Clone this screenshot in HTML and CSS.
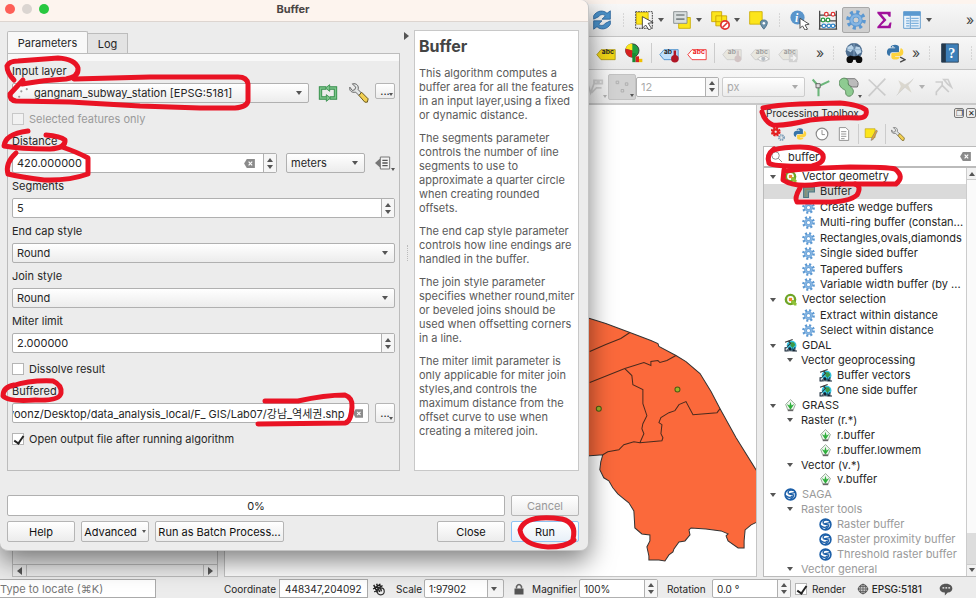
FILE: index.html
```html
<!DOCTYPE html>
<html lang="en">
<head>
<meta charset="utf-8">
<title>Buffer</title>
<link rel="stylesheet" href="styles.css">
</head>
<body>
<svg class="defs" aria-hidden="true">
  <symbol id="gear" viewBox="0 0 24 24"><g fill="none" stroke="#5b98d2"><circle cx="12" cy="12" r="9.500" stroke-width="4.500" stroke-dasharray="3.700 3.760"/><circle cx="12" cy="12" r="5.500" stroke-width="5" stroke="#5b98d2"/><circle cx="12" cy="12" r="5.500" stroke-width="3" stroke="#86b5e2"/></g></symbol>
  <symbol id="qgis" viewBox="0 0 24 24"><circle cx="12" cy="12" r="8.500" fill="#fff" stroke="#6fa628" stroke-width="4.500"/><path d="M13 13h5l5 6v4h-4l-6-6z" fill="#8fc137"/><path d="M9 9h6v6h-6z" fill="#f0872c"/></symbol>
  <symbol id="gdal" viewBox="0 0 24 24"><circle cx="14" cy="12" r="9" fill="#35c3e2"/><path d="M12 6l6 0 3 5-5 5-4-3z" fill="#3c9a46"/><path d="M2 6l14-5M8 3l4 5-6 6" stroke="#333" stroke-width="2" fill="none"/><path d="M1 15h5v2H3v4h2v-2h2v4H1zM9 15h3l2 3v5h-2v-2h-2v2H8v-6zM16 15l4 8h-5zM19 15h2v6h3v2h-5z" fill="#123"/></symbol>
  <symbol id="grass" viewBox="0 0 24 24"><path d="M12 1l9 9-4 10H7L3 10z" fill="#eef7ee" stroke="#8a9a8a" stroke-width="1.500"/><path d="M12 20L5 9l5 3 2-7 2 7 5-3z" fill="#2fae3c"/><path d="M7 21h10" stroke="#666" stroke-width="3"/></symbol>
  <symbol id="saga" viewBox="0 0 24 24"><circle cx="12" cy="12" r="10" fill="#fff" stroke="#1c5fa8" stroke-width="3"/><path d="M19 5C12 2 6 5 8 10M3 14q8 6 12 1M9 11L22 8M8 11l10 2-2 5-5 3" fill="none" stroke="#1c5fa8" stroke-width="2.500"/></symbol>
  <symbol id="bufferTool" viewBox="0 0 24 24"><path d="M3 23V4h20v9H12v10z" fill="#7d9791" stroke="#4c7785" stroke-width="2"/><path d="M7 22V8h15" fill="none" stroke="#8c8f6a" stroke-width="2"/></symbol>
  <symbol id="wrench" viewBox="0 0 24 24"><path d="M4 1l4 4-1 3-3 1-3-4C0 9 3 12 8 11l4 4 3-3-4-4C12 3 9 0 4 1z" fill="#e3e6e6" stroke="#666" stroke-width="1.200"/><path d="M12 15l3-4 8 8-1 4-3 0z" fill="#f1cf52" stroke="#6b5a20" stroke-width="1.200"/></symbol>
  <symbol id="python" viewBox="0 0 24 24"><path d="M6 6c0-5 12-5 11 0v6H8c-3 0-3 5-3 5-5 0-5-10 0-10h7V6z" fill="#3874a8"/><path d="M18 18c0 5-12 5-11 0v-4c0-2 9 0 11-3 1-2 1-4 1-4 5 0 5 10 0 10h-7v1z" fill="#fdd33f"/><circle cx="9" cy="5" r="1" fill="#fff"/></symbol>
  <symbol id="clear" viewBox="0 0 12 10"><path d="M3 0h9v10H3L0 5z" fill="#8b8b8b"/><path d="M5 3l4 4M9 3L5 7" stroke="#fff" stroke-width="1.300"/></symbol>
  <symbol id="tag" viewBox="0 0 24 16"><path d="M1 8l5-6h17v12H6z"/></symbol>
</svg>

<main class="app">
  <header class="app-title"></header>
  <section class="toolbar first" aria-label="Main tools">
    <button class="tool" aria-label="Refresh"><svg viewBox="0 0 24 24"><g fill="#4a90c8" stroke="#2b649b"><path d="M2 11V7c4-7 12-7 16-3l4-3v10H12l4-4c-3-3-7-1-8 1z"/><path d="M22 13v4c-4 7-12 7-16 3l-4 3V13h10l-4 4c3 3 7 1 8-1z"/></g></svg></button>
    <i class="handle"></i>
    <button class="tool menu" aria-label="Select features"><svg viewBox="0 0 24 24"><path d="M2 2h20v20H2z" fill="none" stroke="#222" stroke-dasharray="2 1"/><path d="M3 3h14v14H3z" fill="#fce51b" stroke="#c8a900"/><path d="M10 8l13 7-6 1 4 6-3 2-4-6-4 4z" fill="#fff" stroke="#333"/></svg></button>
    <button class="tool menu" aria-label="Select by value"><svg viewBox="0 0 24 24"><path d="M8 9h14v13H8z" fill="#fce51b" stroke="#c8a900"/><path d="M2 2h16v14H2z" fill="#d9dedf" stroke="#7d8587"/><path d="M5 6h10M5 11h10" stroke="#7d8587" stroke-width="2"/></svg></button>
    <button class="tool menu" aria-label="Deselect"><svg viewBox="0 0 24 24"><path d="M2 2h12v12H2zM7 7h13v12H7z" fill="#fce51b" stroke="#c8a000"/><circle cx="18" cy="18" r="5" fill="#fff" stroke="#e03030" stroke-width="2"/><path d="M15 21l6-6" stroke="#e03030" stroke-width="2"/></svg></button>
    <button class="tool" aria-label="Select by location"><svg viewBox="0 0 24 24"><path d="M2 2h15v15H2z" fill="#fce51b" stroke="#c8a900"/><path d="M19 23c-7-8-4-11 0-11s7 3 0 11z" fill="#6e93ab" stroke="#446b84"/><circle cx="19" cy="16" r="1.500" fill="#fff"/></svg></button>
    <i class="handle"></i>
    <button class="tool" aria-label="Identify"><svg viewBox="0 0 24 24"><circle cx="9" cy="9" r="8.500" fill="#5a95cb"/><text x="6" y="14" class="glyph-i">i</text><path d="M12 10l11 7-5 1 3 5-3 1-3-5-3 3z" fill="#fff" stroke="#333"/></svg></button>
    <button class="tool" aria-label="Field calculator"><svg viewBox="0 0 24 24"><path d="M2 1v22M22 1v22M2 6h20M2 13h20M2 19h20M1 23h22" fill="none" stroke="#444" stroke-width="1.500"/><g stroke-width="1.500" fill="#fff"><g stroke="#d33"><circle cx="10" cy="5" r="2.200"/><circle cx="18" cy="5" r="2.200"/></g><g stroke="#2a9a40"><circle cx="6" cy="12" r="2.200"/><circle cx="12" cy="12" r="2.200"/></g><g stroke="#38c"><circle cx="7" cy="19" r="2.200"/><circle cx="13" cy="19" r="2.200"/><circle cx="18" cy="19" r="2.200"/></g></g></svg></button>
    <button class="tool pressed" aria-label="Processing toolbox"><svg><use href="#gear"/></svg></button>
    <button class="tool" aria-label="Statistics"><svg viewBox="0 0 24 24"><path d="M4 2h16v6h-2l-2-3H9l6 7-7 7h9l2-4h2l-1 7H4v-2l7-8-7-8z" fill="#a0109a"/></svg></button>
    <button class="tool menu" aria-label="Attribute table"><svg viewBox="0 0 24 24"><path d="M2 2h20v20H2z" fill="#eaf3fb" stroke="#5291c9"/><path d="M2 2h20v5H2z" fill="#5a99d0"/><path d="M5 10h4M11 10h9M5 13h4M11 13h9M5 16h4M11 16h9M5 19h4M11 19h9" stroke="#7fb2dd" stroke-width="1.500"/><path d="M10 7v15" stroke="#5291c9"/></svg></button>
    <span class="more end">»</span>
  </section>
  <section class="toolbar second" aria-label="Label tools">
    <button class="tool" aria-label="Labels"><svg viewBox="0 0 24 24"><use href="#tag" class="tag" fill="#f0d516" stroke="#a89410"/><text x="7" y="13" class="glyph">abc</text></svg></button>
    <button class="tool" aria-label="Diagrams"><svg viewBox="0 0 24 24"><circle cx="10" cy="9" r="8" fill="#20a040" stroke="#333"/><path d="M10 9V1a8 8 0 00-8 6z" fill="#fce51b"/><path d="M10 9v8a8 8 0 01-8-10z" fill="#d62020"/><path d="M10 12h4v11h-4z" fill="#198a32"/><path d="M14 16h4v7h-4z" fill="#d62020"/><path d="M18 19h4v4h-4z" fill="#f0c000"/></svg></button>
    <i class="rule"></i>
    <button class="tool" aria-label="Label pin"><svg viewBox="0 0 24 24"><use href="#tag" class="tag" fill="#bfe0fa" stroke="#3d87c6"/><text x="6" y="13" class="glyph">ab</text><path d="M19 9v9" stroke="#b01525" stroke-width="3"/><circle cx="19" cy="19" r="4.500" fill="#b01525"/></svg></button>
    <button class="tool" aria-label="Unplaced labels"><svg viewBox="0 0 24 24"><use href="#tag" class="tag" fill="#fff" stroke="#e22"/><text x="7" y="13" class="glyph red">abc</text></svg></button>
    <i class="rule"></i>
    <button class="tool off" disabled aria-label="Pin labels"><svg viewBox="0 0 24 24"><use href="#tag" class="tag" fill="#dedbc8" stroke="#999"/><text x="7" y="13" class="glyph">ab</text><path d="M19 9v9" stroke="#a88" stroke-width="3"/><circle cx="19" cy="19" r="4" fill="#a88"/></svg></button>
    <button class="tool off" disabled aria-label="Show labels"><svg viewBox="0 0 24 24"><use href="#tag" class="tag" fill="#dedbc8" stroke="#999"/><text x="7" y="13" class="glyph">abc</text><path d="M9 19q7-7 14 0-7 6-14 0" fill="#fff" stroke="#777"/><circle cx="16" cy="19" r="2.500" fill="#678"/></svg></button>
    <button class="tool off" disabled aria-label="Move label"><svg viewBox="0 0 24 24"><use href="#tag" class="tag" fill="#dedbc8" stroke="#999"/><text x="7" y="13" class="glyph">abc</text><path d="M13 13h10v10H13z" fill="#aaa"/><path d="M15 18h6M18 15l3 3-3 3" stroke="#fff" stroke-width="2" fill="none"/></svg></button>
    <i class="spacer"></i><span class="more">»</span>
    <i class="handle"></i>
    <button class="tool" aria-label="Map search"><svg viewBox="0 0 24 24"><circle cx="12" cy="10" r="10" fill="#4d6d8f"/><path d="M4 5l5-3 3 4-4 5-4-2zM14 4l5 1 2 6-5 3-3-5z" fill="#b9d3e8"/><path d="M3 8h18M12 0v18" stroke="#8eaecb"/><circle cx="7" cy="20" r="4" fill="#0b0b0b"/><circle cx="18" cy="20" r="4" fill="#0b0b0b"/><path d="M7 15l4 1h3l4-1 2 5H5z" fill="#0b0b0b"/></svg></button>
    <i class="handle"></i>
    <button class="tool" aria-label="Python console"><svg viewBox="0 0 24 24"><use href="#python" width="22" height="22"/><path d="M17 17l6 3-6 3" fill="none" stroke="#444" stroke-width="1.500"/></svg></button>
    <span class="more">»</span>
    <i class="handle"></i>
    <button class="tool" aria-label="Help contents"><svg viewBox="0 0 24 24"><path d="M2 1h20v22H2z" fill="#3d7fb9" stroke="#2b3f52"/><path d="M2 1h5v22H2z" fill="#24384b"/><text x="10" y="18" class="glyph-q">?</text></svg></button>
    <i class="handle"></i>
  </section>
  <section class="toolbar third" aria-label="Snapping tools">
    <button class="tool off" disabled aria-label="Vertex"><svg viewBox="0 0 24 24"><path d="M3 4l5 15 5-14M12 4h4v4h-4zM18 4h4v4h-4zM9 19l6-6h6" fill="none" stroke="#999" stroke-width="2"/></svg><b class="tri tiny"></b></button>
    <button class="tool pressed soft" disabled aria-label="Snap type"><svg viewBox="0 0 24 24"><path d="M5 5h3v3H5zM16 7h3v3h-3zM11 15h3v3h-3z" fill="none" stroke="#aaa"/></svg><b class="tri tiny"></b></button>
    <div class="spin tolerance off-field"><input aria-label="Tolerance" value="12" disabled><span class="steps"><b class="up"></b><b class="down"></b></span></div>
    <div class="combo unit off-field"><select aria-label="Tolerance unit" disabled><option>px</option></select></div>
    <button class="tool" aria-label="Topological editing"><svg viewBox="0 0 24 24"><path d="M2 3l7 8 13-6M9 11v12" fill="none" stroke="#6bb67a" stroke-width="2.500"/><path d="M6 8h5v5H6z" fill="#ddd" stroke="#555"/></svg></button>
    <button class="tool" aria-label="Overlap"><svg viewBox="0 0 24 24"><path d="M8 2h11q6 4 3 10h-6q-6-2-8-10z" fill="#bbb" stroke="#666"/><path d="M2 3c5-4 10 0 9 4s8 6 6 12-9 5-9 0-2-3-5-6-4-7-1-10z" fill="#8ecb91" stroke="#4e7e52"/></svg><b class="tri tiny"></b></button>
    <button class="tool off" disabled aria-label="Intersection"><svg viewBox="0 0 24 24"><path d="M2 3l20 19M22 2L2 23" stroke="#999" stroke-width="2"/></svg></button>
    <button class="tool menu off" disabled aria-label="Tracing"><svg viewBox="0 0 24 24"><path d="M4 4l8 5 10-6-6 7 4 9-8-6-9 8 4-10z" fill="#bbb29c"/><path d="M22 2L2 22" stroke="#aaa"/></svg></button>
    <button class="tool off" disabled aria-label="Digitize"><svg viewBox="0 0 24 24"><path d="M3 6h8v4l-7 8v4M11 10l8 8M13 3h5l4 9-4-3z" fill="none" stroke="#999" stroke-width="2"/></svg></button>
  </section>

  <div class="workspace">
    <aside class="layers"><div class="hscroll"><b class="arr left"></b><i></i><b class="arr right"></b></div></aside>
    <section class="canvas" aria-label="Map">
      <svg viewBox="225 105 532 470" preserveAspectRatio="xMinYMin slice">
        <path class="land" d="M560 310L589 318 605 323 629 332 650 340 657 343 658 346 675 355 685 361 699 373 710 391 719 408 735 437 758 474V520L750 524 744 529 743 540 743 547H737L727 540 725 535 727 533 720 530 705 528 690 527 688 529 689 534 684 540 678 541 673 548 672 551 668 554 664 560 658 559H648V555L646 546 649 540V534L641 533 634 527 633 510 628 502 623 498 617 493 612 487 608 480 603 477 599 469 600 461 602 454 589 455 560 457Z"/>
        <path class="border" d="M589 351L605 344 620 338 629 332M589 382L624 368 643 362 650 365 650 361 657 360 659 362 666 360 675 355M624 368L631 375 632 384 642 389V403L646 415 642 423 641 428 643 433 639 442M602 454L607 451 618 449 623 444 633 441 639 442 661 440 662 437 660 433 661 424 658 422 660 417 668 412 674 410 678 404 685 401 692 414 716 412 719 408"/>
        <circle class="station" cx="598" cy="408" r="2.500"/><circle class="station" cx="676.500" cy="389" r="2.500"/>
      </svg>
    </section>
    <aside class="dock">
      <div class="dock-title"><span>Processing Toolbox</span><button aria-label="Float">❐</button><button aria-label="Close panel">✕</button></div>
      <div class="dock-tools">
        <button aria-label="Models"><svg viewBox="0 0 24 24"><circle cx="8" cy="8" r="5.500" fill="none" stroke="#e32020" stroke-width="6" stroke-dasharray="2.900 1.420"/><circle cx="8" cy="8" r="4" fill="none" stroke="#e32020" stroke-width="4"/><circle cx="18" cy="18" r="4" fill="none" stroke="#7f9fb8" stroke-width="4" stroke-dasharray="2 1"/></svg></button>
        <button aria-label="Scripts"><svg><use href="#python"/></svg></button>
        <button aria-label="History"><svg viewBox="0 0 24 24"><circle cx="12" cy="12" r="10" fill="#fff" stroke="#888" stroke-width="2"/><path d="M12 5v8h5" fill="none" stroke="#888" stroke-width="1.500"/></svg></button>
        <button aria-label="Results"><svg viewBox="0 0 24 24"><path d="M4 1h11l5 5v17H4z" fill="#fff" stroke="#888" stroke-width="1.500"/><path d="M7 8h9M7 12h9M7 16h9M7 20h6" stroke="#888" stroke-width="1.500"/></svg></button>
        <i class="rule"></i>
        <button aria-label="Edit in place"><svg viewBox="0 0 24 24"><path d="M2 3h17v15H2z" fill="#fce51b" stroke="#b89b00"/><path d="M12 23l2-6L21 5l2 2-7 14z" fill="#e8a33c" stroke="#777"/></svg></button>
        <i class="rule"></i>
        <button aria-label="Options"><svg><use href="#wrench"/></svg></button>
      </div>
      <label class="search"><svg viewBox="0 0 12 12"><circle cx="5" cy="5" r="4" fill="none" stroke="#888"/><path d="M8 8l4 4" stroke="#888"/></svg><input aria-label="Search" value="buffer"><svg class="clear"><use href="#clear"/></svg></label>
      <div class="tree-box">
        <ul class="tree">
          <li class="group"><b class="tri"></b><svg><use href="#qgis"/></svg>Vector geometry</li>
          <li class="leaf chosen"><svg><use href="#bufferTool"/></svg>Buffer</li>
          <li class="leaf tall"><svg><use href="#gear"/></svg>Create wedge buffers</li>
          <li class="leaf"><svg><use href="#gear"/></svg>Multi-ring buffer (constan...</li>
          <li class="leaf tall"><svg><use href="#gear"/></svg>Rectangles,ovals,diamonds</li>
          <li class="leaf"><svg><use href="#gear"/></svg>Single sided buffer</li>
          <li class="leaf tall"><svg><use href="#gear"/></svg>Tapered buffers</li>
          <li class="leaf"><svg><use href="#gear"/></svg>Variable width buffer (by ...</li>
          <li class="group"><b class="tri"></b><svg><use href="#qgis"/></svg>Vector selection</li>
          <li class="leaf tall"><svg><use href="#gear"/></svg>Extract within distance</li>
          <li class="leaf"><svg><use href="#gear"/></svg>Select within distance</li>
          <li class="group"><b class="tri"></b><svg><use href="#gdal"/></svg>GDAL</li>
          <li class="sub"><b class="tri"></b>Vector geoprocessing</li>
          <li class="leaf deep tall"><svg><use href="#gdal"/></svg>Buffer vectors</li>
          <li class="leaf deep"><svg><use href="#gdal"/></svg>One side buffer</li>
          <li class="group"><b class="tri"></b><svg><use href="#grass"/></svg>GRASS</li>
          <li class="sub"><b class="tri"></b>Raster (r.*)</li>
          <li class="leaf deep tall"><svg><use href="#grass"/></svg>r.buffer</li>
          <li class="leaf deep"><svg><use href="#grass"/></svg>r.buffer.lowmem</li>
          <li class="sub"><b class="tri"></b>Vector (v.*)</li>
          <li class="leaf deep"><svg><use href="#grass"/></svg>v.buffer</li>
          <li class="group dim"><b class="tri"></b><svg><use href="#saga"/></svg>SAGA</li>
          <li class="sub dim"><b class="tri"></b>Raster tools</li>
          <li class="leaf deep tall dim"><svg><use href="#saga"/></svg>Raster buffer</li>
          <li class="leaf deep dim"><svg><use href="#saga"/></svg>Raster proximity buffer</li>
          <li class="leaf deep dim"><svg><use href="#saga"/></svg>Threshold raster buffer</li>
          <li class="sub dim"><b class="tri"></b>Vector general</li>
        </ul>
        <div class="vscroll"><b class="up"></b><i></i><b class="down"></b></div>
      </div>
    </aside>
  </div>

  <footer class="status">
    <input class="locate" aria-label="Locate" placeholder="Type to locate (⌘K)">
    <label class="coord">Coordinate <input value="448347,204092"></label>
    <svg class="mark" viewBox="0 0 24 24"><path d="M3 5l6 13M8 3l5 14M13 3l3 13M2 12l12-8M4 17L18 6" stroke="#222" stroke-width="2.500"/><circle cx="15" cy="16" r="6" fill="none" stroke="#333" stroke-width="2"/></svg>
    <label for="scale">Scale</label>
    <div class="combo scale"><select id="scale"><option>1:97902</option></select></div>
    <svg class="lock" viewBox="0 0 24 24"><path d="M7 11V7q5-8 10 0v4" fill="none" stroke="#666" stroke-width="3"/><path d="M3 11h18v12H3z" fill="#555"/></svg>
    <label for="mag">Magnifier</label>
    <div class="spin mag"><input id="mag" value="100%"><span class="steps"><b class="up"></b><b class="down"></b></span></div>
    <label for="rot" class="rot-label">Rotation</label>
    <div class="spin rot"><input id="rot" value="0.0 °"><span class="steps"><b class="up"></b><b class="down"></b></span></div>
    <label class="render"><input type="checkbox" checked>Render</label>
    <button class="crs"><svg viewBox="0 0 24 24"><circle cx="12" cy="12" r="9" fill="#ccc" stroke="#555" stroke-width="2"/><path d="M1 12h22M12 1v22M5 7h14M5 17h14M8 4q-4 8 0 16M16 4q4 8 0 16" fill="none" stroke="#555" stroke-width="1.500"/></svg>EPSG:5181</button>
    <button class="chat" aria-label="Messages"><svg viewBox="0 0 24 24"><path d="M12 3c14 0 14 15 3 15l-5 5v-5C-3 17-1 3 12 3z" fill="#555"/><path d="M6 10h3M11 10h3M16 10h3" stroke="#fff" stroke-width="2"/></svg></button>
  </footer>
</main>

<section class="dialog" role="dialog" aria-label="Buffer">
  <header class="titlebar"><i class="dot close"></i><i class="dot min"></i><i class="dot max"></i><h1>Buffer</h1></header>
  <div class="panes">
    <div class="left">
      <div class="tabs"><button class="tab on">Parameters</button><button class="tab">Log</button></div>
      <form class="page">
        <div class="field">
          <label for="layer">Input layer</label>
          <div class="row">
            <div class="combo layer"><svg viewBox="0 0 12 12"><g fill="#999"><circle cx="2" cy="9" r="1"/><circle cx="4" cy="4" r="1"/><circle cx="9" cy="2" r="1"/></g></svg><select id="layer"><option>gangnam_subway_station [EPSG:5181]</option></select></div>
            <button type="button" class="ico" aria-label="Iterate"><svg viewBox="0 0 24 24"><path d="M10 6H3v12h7M14 18h7V6h-7" fill="none" stroke="#2f8a45" stroke-width="4"/><path d="M14 2v8L9 6zM10 14v8l5-4z" fill="#7cc58b" stroke="#2f8a45"/><path d="M9 6H3v12h7M15 18h6V6h-7" fill="none" stroke="#7cc58b" stroke-width="2"/></svg></button>
            <button type="button" class="ico" aria-label="Advanced options"><svg><use href="#wrench"/></svg></button>
            <button type="button" class="dots short">...<b class="tri tiny"></b></button>
          </div>
        </div>
        <label class="check dim"><input type="checkbox" disabled>Selected features only</label>
        <div class="field">
          <label for="dist">Distance</label>
          <div class="row">
            <div class="spin dist"><input id="dist" value="420.000000"><svg class="clear"><use href="#clear"/></svg><span class="steps"><b class="up"></b><b class="down"></b></span></div>
            <div class="combo meters"><select aria-label="Unit"><option>meters</option></select></div>
            <button type="button" class="ico define" aria-label="Data defined"><svg viewBox="0 0 24 24"><path d="M8 3h14v18H8z" fill="#f3f3f3" stroke="#777" stroke-width="1.500"/><path d="M8 5v14l-8-7z" fill="#777"/><path d="M11 8h8M11 12h8M11 16h8" stroke="#555" stroke-width="2"/></svg><b class="tri tiny"></b></button>
          </div>
        </div>
        <div class="field"><label for="seg">Segments</label><div class="spin"><input id="seg" value="5"><span class="steps"><b class="up"></b><b class="down"></b></span></div></div>
        <div class="field"><label for="cap">End cap style</label><div class="combo"><select id="cap"><option>Round</option></select></div></div>
        <div class="field"><label for="join">Join style</label><div class="combo"><select id="join"><option>Round</option></select></div></div>
        <div class="field"><label for="miter">Miter limit</label><div class="spin"><input id="miter" value="2.000000"><span class="steps"><b class="up"></b><b class="down"></b></span></div></div>
        <label class="check"><input type="checkbox">Dissolve result</label>
        <div class="field">
          <label for="out">Buffered</label>
          <div class="row out-row">
            <div class="spin out"><input id="out" value="yoonz/Desktop/data_analysis_local/F_ GIS/Lab07/강남_역세권.shp"><svg class="clear"><use href="#clear"/></svg></div>
            <button type="button" class="dots">...<b class="tri tiny"></b></button>
          </div>
        </div>
        <label class="check"><input type="checkbox" checked>Open output file after running algorithm</label>
      </form>
    </div>
    <div class="split"><b class="arr right"></b><i></i></div>
    <article class="help">
      <h2>Buffer</h2>
      <p>This algorithm computes a<br>buffer area for all the features<br>in an input layer,using a fixed<br>or dynamic distance.</p>
      <p>The segments parameter<br>controls the number of line<br>segments to use to<br>approximate a quarter circle<br>when creating rounded<br>offsets.</p>
      <p>The end cap style parameter<br>controls how line endings are<br>handled in the buffer.</p>
      <p>The join style parameter<br>specifies whether round,miter<br>or beveled joins should be<br>used when offsetting corners<br>in a line.</p>
      <p>The miter limit parameter is<br>only applicable for miter join<br>styles,and controls the<br>maximum distance from the<br>offset curve to use when<br>creating a mitered join.</p>
    </article>
  </div>
  <div class="actions">
    <div class="progress" role="progressbar">0%</div><button class="btn" disabled>Cancel</button>
  </div>
  <div class="actions last">
    <button class="btn">Help</button><button class="btn adv">Advanced <b class="tri small"></b></button><button class="btn batch">Run as Batch Process...</button><button class="btn push">Close</button><button class="btn run">Run</button>
  </div>
</section>

<svg class="ink" viewBox="0 0 976 598" aria-hidden="true">
  <path d="M14 80Q7 73 7 66 9 61 18 61L58 58Q75 59 78 68 79 77 66 79 44 80 22 84"/>
  <path d="M23 80L10 94Q9 100 16 101L70 102 140 106 200 108H235Q247 107 248 101V84Q247 77 238 77L150 77 74 79"/>
  <path d="M28 131Q5 134 4 146 20 149 50 149 66 148 65 140 60 136 46 135"/>
  <path d="M16 153Q5 163 8 174 20 177 44 180 68 181 88 174V158Q77 152 62 147"/>
  <path d="M14 385Q3 387 3 396 8 402 35 400 60 401 61 393 62 385 53 381 30 380 12 386"/>
  <path d="M265 401H298Q325 395 345 395 353 398 352 407 351 422 345 423L258 424"/>
  <path d="M573 539Q577 523 562 519 525 514 520 530 522 545 548 547 566 547 574 540"/>
  <path d="M763 108Q775 105 800 104L840 103Q860 105 866 110 868 118 858 118 840 117 810 120 785 126 773 125 765 122 762 112"/>
  <path d="M774 149Q766 155 769 163 774 167 812 166 825 163 823 155 818 147 800 147 783 147 774 150"/>
  <path d="M784 171Q810 168 850 167 888 167 895 169 905 177 896 184 870 184 820 184 795 188 783 180L784 170"/>
  <path d="M800 188Q794 198 797 202L820 202Q848 203 857 195 862 186 855 184"/>
</svg>
</body>
</html>
```

FILE: styles.css
```css
* { box-sizing: border-box; }
body { margin: 0; height: 100vh; overflow: hidden; position: relative; font-family: Inter, "Noto Sans CJK KR", sans-serif; font-size: 11px; line-height: 16px; color: #262626; background: #ececec; }
button, input, select { font: inherit; color: inherit; margin: 0; padding: 0; border: 0; background: none; outline: 0; }
select { appearance: none; opacity: 1; }
.defs { position: absolute; width: 0; height: 0; }

/* Application window */
.app { display: flex; flex-direction: column; height: 100%; }
.app-title { flex: none; height: 4px; background: #fdf4ee; }
.toolbar { flex: none; display: flex; align-items: center; height: 33px; overflow: hidden; background: linear-gradient(#f7f7f7, #e9e9e9); border-bottom: 1px solid #c4c4c4; }
.first { padding-left: 588px; }
.second { padding-left: 592px; }
.third { padding-left: 580px; height: 35px; border-bottom: 2px solid #c8c8c8; }
.tool { flex: none; position: relative; width: 28px; height: 26px; display: flex; align-items: center; justify-content: center; }
.tool svg { width: 20px; height: 20px; }
.tool.pressed { background: #cfcfcf; border: 1px solid #a9a9a9; border-radius: 2px; }
.tool.soft { background: #d2d2d2; border-color: #c2c2c2; }
.tool.off { opacity: .4; }
.tool.menu { width: 38px; padding-right: 10px; }
.tool.menu::after { content: ""; position: absolute; right: 4px; top: 11px; border: 3px solid transparent; border-top: 4px solid #555; border-bottom: 0; }
.handle { flex: none; width: 14px; height: 16px; background: radial-gradient(circle, #bbb 1px, transparent 1px) center / 3px 3px no-repeat; background-repeat: repeat-y; }
.rule { flex: none; width: 7px; height: 20px; background: linear-gradient(#ccc, #ccc) center / 1px 100% no-repeat; }
.spacer { flex: none; width: 12px; }
.more { flex: none; width: 12px; text-align: center; font-size: 14px; color: #444; }
.more.end { margin-left: auto; }
.glyph { font-size: 8px; font-weight: 700; fill: #222; }
.glyph.red { fill: #e22; }
.tag { width: 24px; height: 16px; transform: translateY(2px); }
.glyph-i { font: italic 700 14px "Liberation Serif", serif; fill: #fff; }
.glyph-q { font: 700 17px "Liberation Serif", serif; fill: #fff; }
.off-field { color: #aaa; }
.tolerance { width: 83px; margin-right: 3px; }
.unit { width: 83px; margin-right: 2px; }
.tolerance, .unit { flex: none; }

.workspace { flex: 1; min-height: 0; display: flex; padding-bottom: 2px; }
.layers { width: 206px; margin-left: 12px; border: 1px solid #bbb; display: flex; align-items: flex-end; background: #eee; }
.hscroll { flex: 1; height: 12px; display: flex; align-items: center; justify-content: space-between; border-top: 1px solid #bbb; padding: 0 4px; background: #ececec; }
.hscroll i { flex: 1; align-self: stretch; margin: 0 4px; border: 1px solid #bbb; border-width: 0 1px; }
.arr { border: 4px solid transparent; }
.arr.left { border-right: 5px solid #555; border-left: 0; }
.arr.right { border-left: 5px solid #555; border-right: 0; }
.canvas { flex: 1; min-width: 0; margin: 0 6px; border: 1px solid #c4c4c4; border-width: 0 1px 1px; background: #fff; overflow: hidden; }
.canvas svg { display: block; width: 100%; height: 100%; }
.land { fill: #fb693b; stroke: #333; }
.border { fill: none; stroke: #4a2b1e; }
.station { fill: #9cb52b; stroke: #4c5a14; }

.dock { width: 213px; display: flex; flex-direction: column; }
.dock-title { flex: none; display: flex; align-items: center; gap: 2px; height: 16px; padding-left: 3px; font-size: 10px; }
.dock-title span { flex: 1; }
.dock-title button { width: 10px; height: 10px; font-size: 8px; line-height: 8px; border: 1px solid #777; border-radius: 2px; }
.dock-tools { flex: none; display: flex; align-items: center; height: 25px; padding-left: 4px; }
.dock-tools button { width: 22px; height: 18px; padding: 0; }
.dock-tools .rule { margin: 0 -2px 0 0; }
.dock-tools svg { width: 14px; height: 14px; display: block; margin: auto; }
.search { flex: none; display: flex; align-items: center; height: 21px; padding: 0 5px 0 7px; background: #fff; border: 1px solid #bbb; border-right: 0; }
.search svg { width: 11px; height: 11px; }
.search input { flex: 1; min-width: 0; margin-left: 6px; font-size: 11px; }
.search .clear { width: 11px; height: 9px; }
.tree-box { flex: 1; min-height: 0; display: flex; background: #fff; border: 1px solid #bbb; border-right: 0; }
.tree { flex: 1; min-width: 0; margin: 0; padding: 1px 0 0; list-style: none; overflow: hidden; white-space: nowrap; }
.tree li { display: flex; align-items: center; height: 15px; line-height: 15px; }
.tree svg { width: 13px; height: 13px; margin-right: 5px; }
.tree .group { padding-left: 6px; }
.tree .group .tri { margin-right: 8px; }
.tree .sub { height: 14px; line-height: 14px; padding-left: 23px; }
.tree .sub .tri { margin-right: 8px; }
.tree .leaf { padding-left: 38px; }
.tree .deep { padding-left: 55px; }
.tree .tall { height: 16px; }
.tree .chosen { background: #dadada; }
.dim { color: #9a9a9a; }
.tri { flex: none; width: 0; height: 0; border: 3px solid transparent; border-top: 4px solid #555; border-bottom: 0; }
.tri.small { border-width: 3px 2px 0; }
.tri.tiny { position: absolute; right: 1px; bottom: 2px; border-width: 3px 2px 0; }
.vscroll { width: 10px; display: flex; flex-direction: column; align-items: center; padding: 4px 0; border-left: 1px solid #ccc; background: #f2f2f2; }
.vscroll i { flex: 1; width: 100%; margin: 3px 0; border: 1px solid #ccc; border-width: 1px 0; background: linear-gradient(#fafafa 92%, #ddd 92%); }
.up, .down { width: 0; height: 0; border: 3px solid transparent; }
.up { border-bottom: 4px solid #555; border-top: 0; }
.down { border-top: 4px solid #555; border-bottom: 0; }

.status { flex: none; display: flex; align-items: center; height: 19px; font-size: 10px; background: #ececec; }
.status > * { flex: none; }
.status .combo, .status .spin, .status .coord input, .locate { height: 19px; }
.locate { width: 156px; background: #fff; border: 1px solid #aaa; border-left: 0; font-size: 11px; }
.locate::placeholder { color: #777; opacity: 1; }
.coord { display: flex; align-items: center; justify-content: flex-end; gap: 3px; width: 212px; }
.coord input { width: 89px; padding-left: 5px; background: #fff; border: 1px solid #aaa; font-size: 10px; }
.mark { width: 14px; height: 14px; margin: 0 10px 0 4px; }
.scale { width: 80px; margin-left: 2px; }
.lock { width: 12px; height: 14px; margin: 0 7px 0 9px; }
.mag { width: 79px; margin-left: 2px; }
.rot-label { width: 45px; margin-left: 9px; }
.rot { width: 79px; }
.render { display: flex; align-items: center; gap: 5px; margin-left: 4px; }
.crs { display: flex; align-items: center; gap: 3px; margin-left: 11px; font-weight: 500; }
.crs svg { width: 12px; height: 12px; }
.chat { margin-left: 16px; }
.chat svg { width: 16px; height: 14px; display: block; }

/* Shared form controls */
.combo, .spin { position: relative; display: flex; align-items: center; height: 20px; border: 1px solid #b0b0b0; border-radius: 2px; background: #fff; }
.combo { background: linear-gradient(#fff, #ececec); }
.combo::after { content: ""; position: absolute; right: 6px; top: 7px; border: 3px solid transparent; border-top: 4px solid #555; border-bottom: 0; pointer-events: none; }
.combo select, .spin input { flex: 1; width: 100%; min-width: 0; height: 18px; padding: 0 4px; }
.off-field.combo { border-color: #ccc; }
.off-field.combo::after { border-color: #aaa transparent transparent; }
.combo.scale { background: linear-gradient(90deg, #fff 62px, #b0b0b0 62px 63px, #f4f4f4 63px); }
.steps { flex: none; align-self: stretch; width: 13px; display: flex; flex-direction: column; align-items: center; justify-content: center; gap: 3px; border-left: 1px solid #b0b0b0; background: #f6f6f6; }
.clear { flex: none; width: 11px; height: 9px; }
input[type="checkbox"] { appearance: none; flex: none; width: 12px; height: 12px; background: #fff; border: 1px solid #b5b5b5; position: relative; }
input[type="checkbox"]:disabled { background: #f2f2f2; border-color: #c8c8c8; }
input[type="checkbox"]:checked::after { content: ""; position: absolute; left: 3px; top: 0; width: 4px; height: 8px; border: solid #222; border-width: 0 2px 2px 0; transform: rotate(35deg); }

/* Dialog window */
.dialog { position: absolute; left: 0; top: 0; width: min(589px, 100%); padding-bottom: 8px; background: #ececec; border-radius: 0 8px 8px 8px; border-right: 1px solid #c4c4c4; border-bottom: 1px solid #c4c4c4; box-shadow: 0 10px 26px rgba(0,0,0,.5); }
.titlebar { display: flex; align-items: center; gap: 7px; height: 22px; padding: 0 5px 4px; position: relative; background: #fdf4ee; border-bottom: 1px solid #ddd5d0; border-radius: 0 8px 0 0; }
.dot { width: 10px; height: 10px; border-radius: 50%; }
.close { background: #fe5f57; }
.min { background: #dbd5d1; }
.max { background: #28c840; }
.titlebar h1 { flex: 1; margin: 0 53px 0 0; text-align: center; font-size: 11px; line-height: 16px; font-weight: 700; color: #4a4444; }
.panes { display: grid; grid-template-columns: 393px 14px 1fr; padding: 8px 9px 0 7px; }
.left { display: flex; flex-direction: column; }
.tabs { display: flex; align-items: flex-end; height: 23px; }
.tab { height: 20px; width: 40px; border: 1px solid #bcbcbc; border-left: 0; border-bottom: 0; background: #e3e3e3; }
.tab.on { width: 81px; height: 22px; border: 1px solid #bcbcbc; border-bottom: 0; background: #f8f8f8; border-radius: 2px 2px 0 0; }
.page { flex: 1; display: flex; flex-direction: column; gap: 5px; padding: 9px 4px 22px; border: 1px solid #bcbcbc; background: linear-gradient(#f8f8f8 7px, #ececec 7px); }
.field { display: flex; flex-direction: column; gap: 4px; }
.row { display: flex; gap: 6px; height: 20px; }
.layer { flex: 1; margin-right: 3px; }
.layer svg { width: 13px; height: 13px; margin-left: 4px; }
.ico { position: relative; width: 20px; }
.ico + .ico { margin-left: 5px; }
.ico svg { width: 20px; height: 20px; display: block; }
.dots { position: relative; width: 20px; height: 20px; border: 1px solid #b5b5b5; border-radius: 2px; background: linear-gradient(#fff, #ececec); line-height: 12px; }
.dots.short { height: 16px; }
.dist { flex: 1; }
.dist .clear { margin-right: 8px; }
.meters { width: 79px; margin-left: 3px; }
.define { width: 24px; padding: 2px 3px; }
.define svg { width: 18px; height: 16px; }
.define .tri { right: 0; }
.check { display: flex; align-items: center; gap: 5px; margin: 3px 0 1px; height: 16px; }
.out { flex: 1; }
.out .clear { margin: 0 5px; width: 10px; }
.out input { padding: 0; text-indent: -5px; }
.split { display: flex; flex-direction: column; align-items: center; padding-top: 2px; justify-content: space-between; }
.split .arr { margin-right: 2px; }
.split i { height: 16px; width: 1px; margin-bottom: 210px; border-left: 1px dotted #bbb; }
.help { padding: 5px 4px; background: #fff; border: 1px solid #c8c8c8; color: #5a5a5a; }
.help h2 { margin: 0 0 10px; font-size: 16px; line-height: 20px; color: #444; }
.help p { margin: 0 0 9px; line-height: 14px; white-space: nowrap; }
.actions { display: flex; gap: 6px; padding: 24px 9px 0 7px; }
.actions.last { padding-top: 5px; }
.progress { flex: 1; height: 21px; line-height: 20px; text-align: center; background: #fff; border: 1px solid #b0b0b0; border-radius: 2px; }
.btn { width: 68px; height: 21px; border: 1px solid #b5b5b5; border-radius: 2px; background: linear-gradient(#fff, #ececec); color: #111; white-space: nowrap; }
.btn:disabled { color: #999; }
.adv { display: flex; align-items: center; justify-content: center; gap: 5px; }
.batch { width: 129px; }
.push { margin-left: auto; }
.run { border-color: #8fc3f2; background: linear-gradient(#fff, #e8f0f8); }

/* Pen marks over both windows */
.ink { position: absolute; left: 0; top: 0; width: 976px; height: 598px; pointer-events: none; }
.ink path { fill: none; stroke: #e91324; stroke-width: 5; stroke-linecap: round; stroke-linejoin: round; }
```
